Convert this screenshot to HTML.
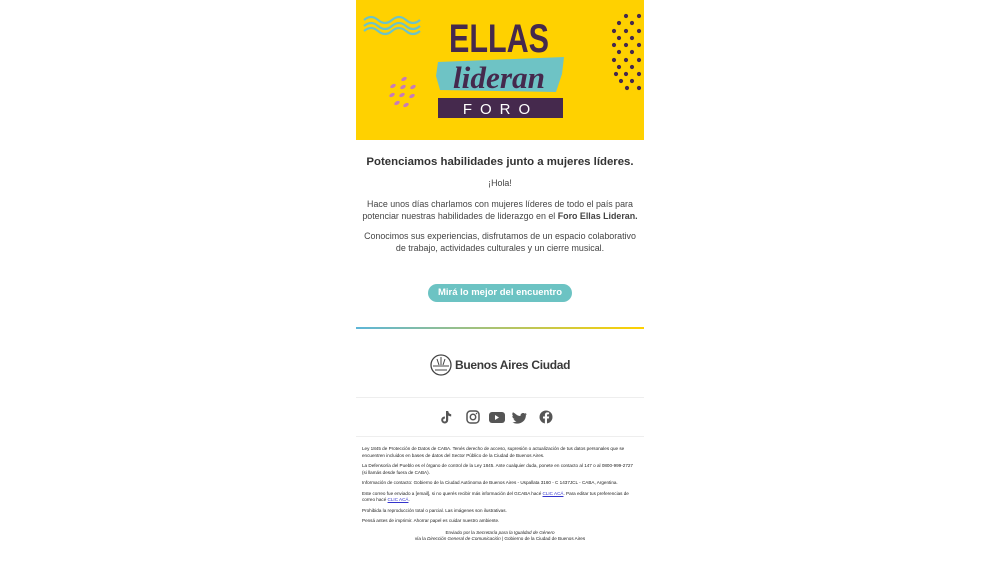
<!DOCTYPE html>
<html><head><meta charset="utf-8"><style>
body{margin:0;background:#fff;font-family:"Liberation Sans",Arial,sans-serif;color:#333;}
.col{position:absolute;left:356px;width:288px;top:0;}
.c{text-align:center;}
p{margin:0}
.small{font-size:4.6px;line-height:6.5px;color:#222;margin:0 6px;}
.small p{margin-bottom:4px}
a{color:#33c;text-decoration:underline}
</style></head><body>
<div class="col">
<svg width="288" height="140" viewBox="0 0 288 140" style="display:block">
<rect width="288" height="140" fill="#ffd100"/>
<g fill="none" stroke="#6ec3c5" stroke-width="2.2">
<path d="M8 20 q7 -6 14 0 t14 0 t14 0 t14 0"/>
<path d="M8 26 q7 -6 14 0 t14 0 t14 0 t14 0"/>
<path d="M8 31 q7 -6 14 0 t14 0 t14 0 t14 0"/>
</g>
<g fill="#c77bb8">
<ellipse cx="48" cy="79" rx="3" ry="1.8" transform="rotate(-30 48 79)"/>
<ellipse cx="37" cy="86" rx="3" ry="1.8" transform="rotate(-30 37 86)"/>
<ellipse cx="47" cy="87" rx="3" ry="1.8" transform="rotate(-30 47 87)"/>
<ellipse cx="57" cy="87" rx="3" ry="1.8" transform="rotate(-30 57 87)"/>
<ellipse cx="36" cy="95" rx="3" ry="1.8" transform="rotate(-30 36 95)"/>
<ellipse cx="46" cy="95" rx="3" ry="1.8" transform="rotate(-30 46 95)"/>
<ellipse cx="56" cy="96" rx="3" ry="1.8" transform="rotate(-30 56 96)"/>
<ellipse cx="41" cy="103" rx="3" ry="1.8" transform="rotate(-30 41 103)"/>
<ellipse cx="50" cy="105" rx="3" ry="1.8" transform="rotate(-30 50 105)"/>
</g>
<g fill="#45294d">
<circle cx="270" cy="16" r="2.1"/><circle cx="283" cy="16" r="2.1"/>
<circle cx="263" cy="23" r="2.1"/><circle cx="276" cy="23" r="2.1"/>
<circle cx="258" cy="31" r="2.1"/><circle cx="270" cy="31" r="2.1"/><circle cx="283" cy="31" r="2.1"/>
<circle cx="263" cy="38" r="2.1"/><circle cx="276" cy="38" r="2.1"/>
<circle cx="258" cy="45" r="2.1"/><circle cx="270" cy="45" r="2.1"/><circle cx="283" cy="45" r="2.1"/>
<circle cx="263" cy="52" r="2.1"/><circle cx="276" cy="52" r="2.1"/>
<circle cx="258" cy="60" r="2.1"/><circle cx="270" cy="60" r="2.1"/><circle cx="283" cy="60" r="2.1"/>
<circle cx="263" cy="67" r="2.1"/><circle cx="276" cy="67" r="2.1"/>
<circle cx="260" cy="74" r="2.1"/><circle cx="270" cy="74" r="2.1"/><circle cx="283" cy="74" r="2.1"/>
<circle cx="265" cy="81" r="2.1"/><circle cx="276" cy="81" r="2.1"/><circle cx="283" cy="88" r="2.1"/><circle cx="271" cy="88" r="2.1"/>
</g>
<text x="143" y="52" text-anchor="middle" font-family="Liberation Sans Narrow,Liberation Sans,sans-serif" font-size="40" font-weight="bold" fill="#45294d" textLength="100" lengthAdjust="spacingAndGlyphs">ELLAS</text>
<path d="M82 62 L208 57 L206 74 L200 92 L84 90 L80 76Z" fill="#6ec3c5"/>
<text x="143" y="88" text-anchor="middle" font-family="Liberation Serif,serif" font-style="italic" font-weight="bold" font-size="31" fill="#45294d" textLength="92" lengthAdjust="spacingAndGlyphs">lideran</text>
<rect x="82" y="98" width="125" height="20" fill="#45294d"/>
<text x="144.5" y="114" text-anchor="middle" font-size="15" fill="#fff" letter-spacing="8">FORO</text>
</svg>
<div class="c" style="margin-top:16px;font-size:11.4px;font-weight:bold;color:#333;white-space:nowrap">Potenciamos habilidades junto a mujeres líderes.</div>
<div class="c" style="font-size:8.9px;line-height:12px;color:#444;margin:9px 0 0">
<p>¡Hola!</p>
<p style="margin-top:9px;white-space:nowrap">Hace unos días charlamos con mujeres líderes de todo el país para<br>potenciar nuestras habilidades de liderazgo en el <b>Foro Ellas Lideran.</b></p>
<p style="margin-top:8px">Conocimos sus experiencias, disfrutamos de un espacio colaborativo<br>de trabajo, actividades culturales y un cierre musical.</p>
</div>
<div style="position:absolute;top:284px;left:72px;width:144px;height:18px;border-radius:9px;background:#6cc3c3;color:#fff;font-size:9.5px;font-weight:bold;text-align:center;line-height:18px">Mirá lo mejor del encuentro</div>
<div style="position:absolute;top:327px;left:0;width:288px;height:2px;background:linear-gradient(90deg,#5db6d8,#ffd100)"></div>
<div style="position:absolute;top:353px;left:74px;width:150px;height:24px">
<svg width="22" height="24" viewBox="0 0 22 24" style="position:absolute;left:0;top:0"><circle cx="11" cy="12" r="10" fill="#fff" stroke="#444" stroke-width="1.3"/><path d="M3 13h16M5 17h12M7 6l2 6M15 6l-2 6M11 4v8" stroke="#444" stroke-width="1"/></svg>
<span style="position:absolute;left:25px;top:5px;font-size:12px;font-weight:bold;color:#3a3a3a;white-space:nowrap;letter-spacing:-0.3px">Buenos Aires Ciudad</span>
</div>
<div style="position:absolute;top:397px;left:0;width:288px;height:1px;background:#eee"></div>
<svg style="position:absolute;top:410px;left:84px" width="120" height="14" viewBox="0 0 120 14" fill="#555">
<path d="M6 1h2.2c.2 1.8 1.3 3 3 3.2v2.2c-1.1 0-2.1-.3-3-.9v4.5a3.5 3.5 0 1 1-3.3-3.5v2.2a1.4 1.4 0 1 0 1.1 1.3z"/>
<rect x="27" y="1" width="12" height="12" rx="3.5" fill="none" stroke="#555" stroke-width="1.5"/><circle cx="33" cy="7" r="2.7" fill="none" stroke="#555" stroke-width="1.5"/><circle cx="36.5" cy="3.5" r=".8"/>
<rect x="49" y="2" width="16" height="11" rx="3"/><path d="M55 5v5l4-2.5z" fill="#fff"/>
<path d="M75 3.5c1.5 1.5 3.5 2.5 5.5 2.5-.3-2.5 2.5-4 4.3-2.4l1.7-.7-.9 1.5 1.3-.4-1 1.2c0 5-4 8.5-9 8.4-1.8 0-3.3-.5-4.5-1.3 1.5.1 3-.3 4-1.2-1.4 0-2.5-.9-2.8-2h1.2c-1.5-.4-2.5-1.6-2.5-3.1l1.2.3c-1.3-1-1.6-2.7-.5-4.1z"/>
<circle cx="106" cy="7" r="6.5"/><path d="M107 14V8.5h1.8l.3-2h-2.1V5.3c0-.6.2-1 1-1h1.1V2.5c-.5 0-1.4-.1-1.8-.1-1.6 0-2.4 1-2.4 2.6v1.5H103v2h1.9V14z" fill="#fff"/>
</svg>
<div style="position:absolute;top:436px;left:0;width:288px;height:1px;background:#eee"></div>
<div class="small" style="position:absolute;top:446px;left:0;width:276px">
<p>Ley 1845 de Protección de Datos de CABA. Tenés derecho de acceso, supresión o actualización de tus datos personales que se encuentren incluidos en bases de datos del Sector Público de la Ciudad de Buenos Aires.</p>
<p>La Defensoría del Pueblo es el órgano de control de la Ley 1845. Ante cualquier duda, ponete en contacto al 147 o al 0800-999-2727 (si llamás desde fuera de CABA).</p>
<p>Información de contacto: Gobierno de la Ciudad Autónoma de Buenos Aires - Uspallata 3160 - C 1437JCL - CABA, Argentina.</p>
<p>Este correo fue enviado a [email], si no querés recibir más información del GCABA hacé <a>CLIC ACÁ</a>. Para editar tus preferencias de correo hacé <a>CLIC ACÁ</a>.</p>
<p>Prohibida la reproducción total o parcial. Las imágenes son ilustrativas.</p>
<p>Pensá antes de imprimir. Ahorrar papel es cuidar nuestro ambiente.</p>
<p style="text-align:center;margin-top:5px">Enviado por la <i>Secretaría para la Igualdad de Género</i><br>vía la <i>Dirección General de Comunicación</i> | Gobierno de la Ciudad de Buenos Aires</p>
</div>
</div>
</body></html>
